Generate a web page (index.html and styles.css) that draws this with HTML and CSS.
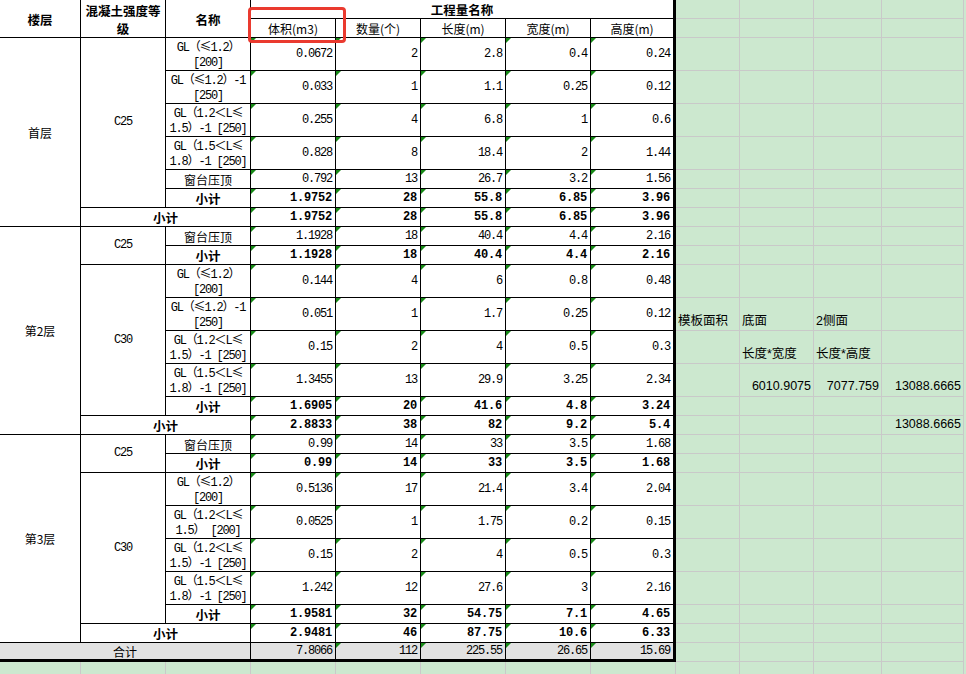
FILE: index.html
```html
<!DOCTYPE html>
<html lang="zh-CN">
<head>
<meta charset="utf-8">
<title>工程量统计</title>
<link rel="stylesheet" href="styles.css">
</head>
<body>
<div class="sheet">
  <!-- header row 1 -->
  <div class="c h r2 top"><span>楼层</span></div>
  <div class="c h r2 top"><span class="two">混凝土强度等<br>级</span></div>
  <div class="c h r2 top"><span>名称</span></div>
  <div class="c h s5 e top1"><span>工程量名称</span></div>
  <div class="g"></div><div class="g"></div><div class="g"></div><div class="g"></div>
  <!-- header row 2 -->
  <div class="c h2">体积(m3)</div>
  <div class="c h2">数量(个)</div>
  <div class="c h2">长度(m)</div>
  <div class="c h2">宽度(m)</div>
  <div class="c h2 e">高度(m)</div>
  <div class="g"></div><div class="g"></div><div class="g"></div><div class="g"></div>

  <!-- 首层 -->
  <div class="c tx r7">首层</div>
  <div class="c mono r6">C25</div>
  <div class="c nm"><span>GL（<span class="le">≤</span>1.2）<br>[200]</span></div>
  <div class="c n">0.0672</div><div class="c n">2</div><div class="c n">2.8</div><div class="c n">0.4</div><div class="c n e">0.24</div>
  <div class="g"></div><div class="g"></div><div class="g"></div><div class="g"></div>

  <div class="c nm"><span>GL（<span class="le">≤</span>1.2）-1<br>[250]</span></div>
  <div class="c n">0.033</div><div class="c n">1</div><div class="c n">1.1</div><div class="c n">0.25</div><div class="c n e">0.12</div>
  <div class="g"></div><div class="g"></div><div class="g"></div><div class="g"></div>

  <div class="c nm"><span>GL（1.2＜L<span class="le">≤</span><br>1.5）-1 [250]</span></div>
  <div class="c n">0.255</div><div class="c n">4</div><div class="c n">6.8</div><div class="c n">1</div><div class="c n e">0.6</div>
  <div class="g"></div><div class="g"></div><div class="g"></div><div class="g"></div>

  <div class="c nm"><span>GL（1.5＜L<span class="le">≤</span><br>1.8）-1 [250]</span></div>
  <div class="c n">0.828</div><div class="c n">8</div><div class="c n">18.4</div><div class="c n">2</div><div class="c n e">1.44</div>
  <div class="g"></div><div class="g"></div><div class="g"></div><div class="g"></div>

  <div class="c tx">窗台压顶</div>
  <div class="c n">0.792</div><div class="c n">13</div><div class="c n">26.7</div><div class="c n">3.2</div><div class="c n e">1.56</div>
  <div class="g"></div><div class="g"></div><div class="g"></div><div class="g"></div>

  <div class="c sub">小计</div>
  <div class="c n b">1.9752</div><div class="c n b">28</div><div class="c n b">55.8</div><div class="c n b">6.85</div><div class="c n b e">3.96</div>
  <div class="g"></div><div class="g"></div><div class="g"></div><div class="g"></div>

  <div class="c sub s2">小计</div>
  <div class="c n b">1.9752</div><div class="c n b">28</div><div class="c n b">55.8</div><div class="c n b">6.85</div><div class="c n b e">3.96</div>
  <div class="g"></div><div class="g"></div><div class="g"></div><div class="g"></div>

  <!-- 第2层 -->
  <div class="c tx r8">第2层</div>
  <div class="c mono r2">C25</div>
  <div class="c tx">窗台压顶</div>
  <div class="c n">1.1928</div><div class="c n">18</div><div class="c n">40.4</div><div class="c n">4.4</div><div class="c n e">2.16</div>
  <div class="g"></div><div class="g"></div><div class="g"></div><div class="g"></div>

  <div class="c sub">小计</div>
  <div class="c n b">1.1928</div><div class="c n b">18</div><div class="c n b">40.4</div><div class="c n b">4.4</div><div class="c n b e">2.16</div>
  <div class="g"></div><div class="g"></div><div class="g"></div><div class="g"></div>

  <div class="c mono r5">C30</div>
  <div class="c nm"><span>GL（<span class="le">≤</span>1.2）<br>[200]</span></div>
  <div class="c n">0.144</div><div class="c n">4</div><div class="c n">6</div><div class="c n">0.8</div><div class="c n e">0.48</div>
  <div class="g"></div><div class="g"></div><div class="g"></div><div class="g"></div>

  <div class="c nm"><span>GL（<span class="le">≤</span>1.2）-1<br>[250]</span></div>
  <div class="c n">0.051</div><div class="c n">1</div><div class="c n">1.7</div><div class="c n">0.25</div><div class="c n e">0.12</div>
  <div class="g">模板面积</div><div class="g">底面</div><div class="g">2侧面</div><div class="g"></div>

  <div class="c nm"><span>GL（1.2＜L<span class="le">≤</span><br>1.5）-1 [250]</span></div>
  <div class="c n">0.15</div><div class="c n">2</div><div class="c n">4</div><div class="c n">0.5</div><div class="c n e">0.3</div>
  <div class="g"></div><div class="g">长度*宽度</div><div class="g">长度*高度</div><div class="g"></div>

  <div class="c nm"><span>GL（1.5＜L<span class="le">≤</span><br>1.8）-1 [250]</span></div>
  <div class="c n">1.3455</div><div class="c n">13</div><div class="c n">29.9</div><div class="c n">3.25</div><div class="c n e">2.34</div>
  <div class="g"></div><div class="g r">6010.9075</div><div class="g r">7077.759</div><div class="g r">13088.6665</div>

  <div class="c sub">小计</div>
  <div class="c n b">1.6905</div><div class="c n b">20</div><div class="c n b">41.6</div><div class="c n b">4.8</div><div class="c n b e">3.24</div>
  <div class="g"></div><div class="g"></div><div class="g"></div><div class="g"></div>

  <div class="c sub s2">小计</div>
  <div class="c n b">2.8833</div><div class="c n b">38</div><div class="c n b">82</div><div class="c n b">9.2</div><div class="c n b e">5.4</div>
  <div class="g"></div><div class="g"></div><div class="g"></div><div class="g r">13088.6665</div>

  <!-- 第3层 -->
  <div class="c tx r8">第3层</div>
  <div class="c mono r2">C25</div>
  <div class="c tx">窗台压顶</div>
  <div class="c n">0.99</div><div class="c n">14</div><div class="c n">33</div><div class="c n">3.5</div><div class="c n e">1.68</div>
  <div class="g"></div><div class="g"></div><div class="g"></div><div class="g"></div>

  <div class="c sub">小计</div>
  <div class="c n b">0.99</div><div class="c n b">14</div><div class="c n b">33</div><div class="c n b">3.5</div><div class="c n b e">1.68</div>
  <div class="g"></div><div class="g"></div><div class="g"></div><div class="g"></div>

  <div class="c mono r5">C30</div>
  <div class="c nm"><span>GL（<span class="le">≤</span>1.2）<br>[200]</span></div>
  <div class="c n">0.5136</div><div class="c n">17</div><div class="c n">21.4</div><div class="c n">3.4</div><div class="c n e">2.04</div>
  <div class="g"></div><div class="g"></div><div class="g"></div><div class="g"></div>

  <div class="c nm"><span>GL（1.2＜L<span class="le">≤</span><br>1.5） [200]</span></div>
  <div class="c n">0.0525</div><div class="c n">1</div><div class="c n">1.75</div><div class="c n">0.2</div><div class="c n e">0.15</div>
  <div class="g"></div><div class="g"></div><div class="g"></div><div class="g"></div>

  <div class="c nm"><span>GL（1.2＜L<span class="le">≤</span><br>1.5）-1 [250]</span></div>
  <div class="c n">0.15</div><div class="c n">2</div><div class="c n">4</div><div class="c n">0.5</div><div class="c n e">0.3</div>
  <div class="g"></div><div class="g"></div><div class="g"></div><div class="g"></div>

  <div class="c nm"><span>GL（1.5＜L<span class="le">≤</span><br>1.8）-1 [250]</span></div>
  <div class="c n">1.242</div><div class="c n">12</div><div class="c n">27.6</div><div class="c n">3</div><div class="c n e">2.16</div>
  <div class="g"></div><div class="g"></div><div class="g"></div><div class="g"></div>

  <div class="c sub">小计</div>
  <div class="c n b">1.9581</div><div class="c n b">32</div><div class="c n b">54.75</div><div class="c n b">7.1</div><div class="c n b e">4.65</div>
  <div class="g"></div><div class="g"></div><div class="g"></div><div class="g"></div>

  <div class="c sub s2">小计</div>
  <div class="c n b">2.9481</div><div class="c n b">46</div><div class="c n b">87.75</div><div class="c n b">10.6</div><div class="c n b e">6.33</div>
  <div class="g"></div><div class="g"></div><div class="g"></div><div class="g"></div>

  <!-- 合计 -->
  <div class="c tx tot s3">合计</div>
  <div class="c n tot x">7.8066</div><div class="c n tot">112</div><div class="c n tot">225.55</div><div class="c n tot">26.65</div><div class="c n tot e">15.69</div>
  <div class="g"></div><div class="g"></div><div class="g"></div><div class="g"></div>

  <!-- empty sheet row below -->
  <div class="g"></div><div class="g"></div><div class="g"></div><div class="g"></div>
  <div class="g"></div><div class="g"></div><div class="g"></div><div class="g"></div>
  <div class="g"></div><div class="g"></div><div class="g"></div><div class="g"></div>
</div>
<div class="mark"></div>
</body>
</html>
```

FILE: styles.css
```css
* {
  box-sizing: border-box;
}

html,
body {
  margin: 0;
  padding: 0;
}

body {
  position: relative;
  width: 966px;
  height: 674px;
  overflow: hidden;
  background: #cce8cf;
  color: #000;
  font-family: "Noto Sans CJK SC", sans-serif;
}

.sheet {
  display: grid;
  grid-template-columns: 81px repeat(7, 85px) 64px 74px 68px 82px;
  grid-template-rows:
    19px 19px
    repeat(4, 33px) repeat(5, 19px)
    repeat(4, 33px) repeat(4, 19px)
    repeat(4, 33px) 19px 19px
    19px 20px;
}

/* table cells */
.c {
  position: relative;
  display: flex;
  align-items: center;
  justify-content: center;
  text-align: center;
  white-space: nowrap;
  background: #fff;
  border-right: 1px solid #000;
  border-bottom: 1px solid #000;
  font-size: 12px;
  line-height: 15px;
}

.h {
  font-weight: bold;
  font-size: 12.5px;
  line-height: 18px;
}

.two {
  display: block;
  line-height: 18px;
}

.top {
  padding-top: 3px;
}

.top1 {
  padding-top: 2px;
}

.h2 {
  font-size: 12px;
}

.tx {
  font-size: 12px;
}

.mono {
  font-family: "Liberation Mono", monospace;
  font-size: 12px;
  letter-spacing: -1.2px;
}

.nm {
  font-family: "Liberation Mono", "Noto Sans CJK SC", monospace;
  font-size: 12px;
  line-height: 15px;
  letter-spacing: -1.2px;
}

.le {
  font-family: "Noto Sans CJK SC", sans-serif;
}

.sub {
  font-weight: bold;
  font-size: 12.5px;
}

.n {
  justify-content: flex-end;
  padding-right: 3px;
  font-family: "Liberation Mono", monospace;
  font-size: 12px;
  letter-spacing: -1.2px;
}

.n::before {
  content: "";
  position: absolute;
  left: 0;
  top: 0;
  border-top: 5px solid #178a17;
  border-right: 5px solid transparent;
}

.n.x::before {
  display: none;
}

.b {
  font-weight: bold;
  letter-spacing: -0.2px;
}

.e {
  border-right-width: 3px;
}

.tot {
  background: #e2e2e2;
  border-bottom-width: 3px;
}

/* spans */
.s2 { grid-column: span 2; }
.s3 { grid-column: span 3; }
.s5 { grid-column: span 5; }
.r2 { grid-row: span 2; }
.r5 { grid-row: span 5; }
.r6 { grid-row: span 6; }
.r7 { grid-row: span 7; }
.r8 { grid-row: span 8; }

/* green sheet cells */
.g {
  display: flex;
  align-items: flex-end;
  padding: 0 2px 1px;
  white-space: nowrap;
  border-right: 1px solid #c9c9c9;
  border-bottom: 1px solid #c9c9c9;
  font-family: "Liberation Sans", "Noto Sans CJK SC", sans-serif;
  font-size: 12.5px;
  line-height: 15px;
}

.g.r {
  justify-content: flex-end;
  padding-bottom: 2px;
}

/* red annotation box */
.mark {
  position: absolute;
  left: 248px;
  top: 7px;
  width: 98px;
  height: 36px;
  border: 3px solid #ea3a2f;
  border-radius: 4px;
}
```
